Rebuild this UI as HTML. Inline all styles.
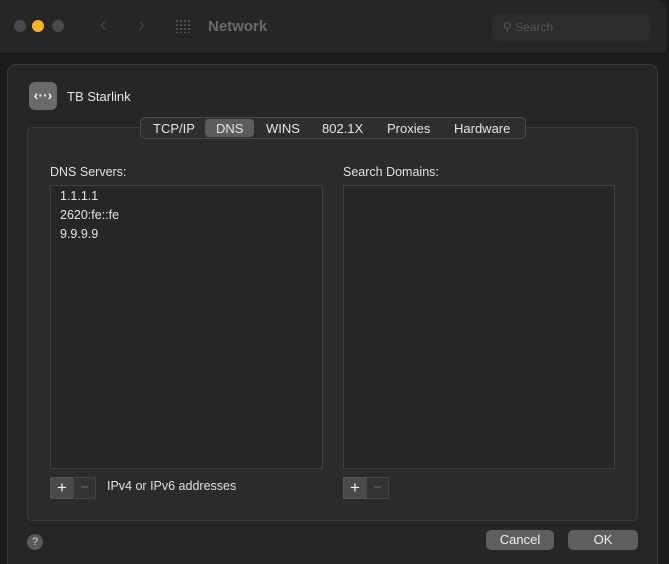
<html style="height:564px;overflow:hidden"><head><style>
body{margin:0;width:669px;height:564px;background:#1c1c1c;font-family:"Liberation Sans",sans-serif;color:#ddd;position:relative;overflow:hidden}
.a{position:absolute}
</style></head><body>
<div class="a" style="left:0;top:0;width:666px;height:53px;background:#262626;border-bottom:1px solid #111;border-radius:0 10px 0 0"></div>
<div class="a" style="left:14px;top:20px;width:12px;height:12px;border-radius:6px;background:#4a4a4a"></div>
<div class="a" style="left:32px;top:20px;width:12px;height:12px;border-radius:6px;background:#f5b52a"></div>
<div class="a" style="left:52px;top:20px;width:12px;height:12px;border-radius:6px;background:#4a4a4a"></div>
<div class="a" style="left:100px;top:14px;font-size:20px;color:#444">‹</div>
<div class="a" style="left:138px;top:14px;font-size:20px;color:#444">›</div>
<div class="a" style="left:175px;top:19px;width:16px;height:14px;background:radial-gradient(circle,#555 1px,transparent 1.2px) 0 0/4px 4px"></div>
<div class="a" style="left:208px;top:18px;font-size:15px;font-weight:bold;color:#6a6a6a">Network</div>
<div class="a" style="left:492px;top:13px;width:159px;height:28px;background:#2c2c2c;border-radius:6px"></div>
<div class="a" style="left:503px;top:20px;font-size:12px;color:#555">⚲ Search</div>
<div class="a" style="left:7px;top:64px;width:649px;height:505px;background:#262626;border:1px solid #3a3a3a;border-radius:9px"></div>
<div class="a" style="left:29px;top:82px;width:28px;height:28px;background:#6a6a6a;border-radius:6px;color:#eee;font-size:14px;font-weight:bold;text-align:center;line-height:27px">‹··›</div>
<div class="a" style="left:67px;top:89px;font-size:13px;color:#e6e6e6">TB Starlink</div>
<div class="a" style="left:27px;top:127px;width:609px;height:392px;background:#2b2b2b;border:1px solid #3a3a3a;border-radius:5px"></div>
<div class="a" style="left:140px;top:117px;width:384px;height:20px;background:#2e2e2e;border:1px solid #4a4a4a;border-radius:5px;font-size:13px;color:#e6e6e6">
<span class="a" style="left:12px;top:3px">TCP/IP</span>
<span class="a" style="left:64px;top:1px;width:49px;height:18px;background:#5c5c5c;border-radius:4px"></span>
<span class="a" style="left:75px;top:3px">DNS</span>
<span class="a" style="left:125px;top:3px">WINS</span>
<span class="a" style="left:181px;top:3px">802.1X</span>
<span class="a" style="left:246px;top:3px">Proxies</span>
<span class="a" style="left:313px;top:3px">Hardware</span>
</div>
<div class="a" style="left:50px;top:165px;font-size:12.5px;color:#e0e0e0">DNS Servers:</div>
<div class="a" style="left:343px;top:165px;font-size:12.5px;color:#e0e0e0">Search Domains:</div>
<div class="a" style="left:50px;top:185px;width:271px;height:282px;background:#262626;border:1px solid #404040"></div>
<div class="a" style="left:343px;top:185px;width:270px;height:282px;background:#262626;border:1px solid #404040"></div>
<div class="a" style="left:60px;top:187px;font-size:12.5px;line-height:19px;color:#e6e6e6">1.1.1.1<br>2620:fe::fe<br>9.9.9.9</div>
<div class="a" style="left:50px;top:477px;width:22px;height:20px;background:#4a4a4a;border:1px solid #555;color:#eee;text-align:center;font-size:17px;line-height:19px">+</div>
<div class="a" style="left:73px;top:477px;width:21px;height:20px;background:#333;border:1px solid #444;color:#666;text-align:center;font-size:15px;line-height:19px">−</div>
<div class="a" style="left:343px;top:477px;width:22px;height:20px;background:#4a4a4a;border:1px solid #555;color:#eee;text-align:center;font-size:17px;line-height:19px">+</div>
<div class="a" style="left:366px;top:477px;width:21px;height:20px;background:#333;border:1px solid #444;color:#666;text-align:center;font-size:15px;line-height:19px">−</div>
<div class="a" style="left:107px;top:479px;font-size:12.5px;color:#e0e0e0">IPv4 or IPv6 addresses</div>
<div class="a" style="left:27px;top:534px;width:16px;height:16px;border-radius:8px;background:#5a5a5a;color:#ddd;font-size:11px;text-align:center;line-height:16px">?</div>
<div class="a" style="left:486px;top:530px;width:68px;height:20px;border-radius:5px;background:#5e5e5e;color:#eee;font-size:13px;text-align:center;line-height:20px">Cancel</div>
<div class="a" style="left:568px;top:530px;width:70px;height:20px;border-radius:5px;background:#5e5e5e;color:#eee;font-size:13px;text-align:center;line-height:20px">OK</div>
</body></html>
